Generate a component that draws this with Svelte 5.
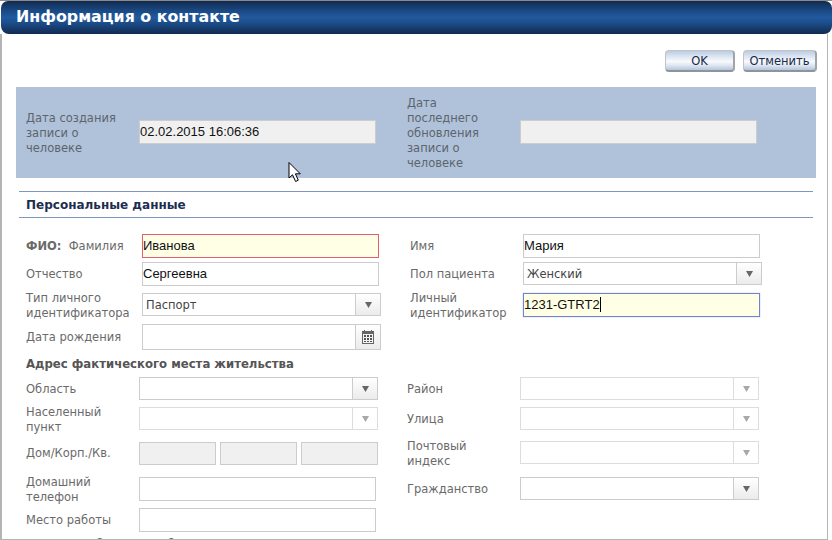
<script>
  const arrow = 'M0 0H7L3.5 6Z';
</script>

<div class="page">
  <header class="head"><h1>Информация о контакте</h1></header>
  <main class="body">
    <div class="toolbar">
      <button class="btn ok">OK</button>
      <button class="btn cancel">Отменить</button>
    </div>

    <section class="panel">
      <div class="lbl">Дата создания записи о человеке</div>
      <div class="cell"><div class="inp ro w237">02.02.2015 16:06:36</div></div>
      <div class="lbl">Дата последнего обновления записи о человеке</div>
      <div class="cell"><div class="inp ro w237"></div></div>
    </section>

    <h2 class="section">Персональные данные</h2>

    <div class="row p h24 first">
      <div class="lbl"><b>ФИО:</b>&nbsp; Фамилия</div>
      <div class="inp w237 err">Иванова</div>
      <div class="lbl">Имя</div>
      <div class="inp w237">Мария</div>
    </div>
    <div class="row p h24 m4">
      <div class="lbl">Отчество</div>
      <div class="inp w237">Сергеевна</div>
      <div class="lbl">Пол пациента</div>
      <div class="sel"><span class="val">Женский</span><span class="drop"><svg width="7" height="6"><path d={arrow} /></svg></span></div>
    </div>
    <div class="row p h24 m7">
      <div class="lbl lo">Тип личного идентификатора</div>
      <div class="sel"><span class="val">Паспорт</span><span class="drop"><svg width="7" height="6"><path d={arrow} /></svg></span></div>
      <div class="lbl lo">Личный идентификатор</div>
      <div class="inp w237 focus">1231-GTRT2<span class="caret"></span></div>
    </div>
    <div class="row p h26 m7">
      <div class="lbl">Дата рождения</div>
      <div class="sel tall">
        <span class="val"></span>
        <span class="drop">
          <svg class="cal" width="12" height="14" viewBox="0 0 12 14">
            <rect x="0.5" y="1.5" width="11" height="12" fill="#f4f4f4" stroke="#666" />
            <rect x="0" y="1" width="12" height="3" fill="#666" />
            <rect x="2" y="0" width="1" height="2" fill="#666" />
            <rect x="9" y="0" width="1" height="2" fill="#666" />
            <path d="M2 5h2v2H2zM5 5h2v2H5zM8 5h2v2H8zM2 8h2v2H2zM5 8h2v2H5zM8 8h2v2H8zM2 11h2v1H2zM5 11h2v1H5zM8 11h2v1H8z" fill="#555" />
          </svg>
        </span>
      </div>
      <div></div>
      <div></div>
    </div>

    <h3 class="sub">Адрес фактического места жительства</h3>

    <div class="row a h23">
      <div class="lbl lo">Область</div>
      <div class="sel"><span class="val"></span><span class="drop"><svg width="7" height="6"><path d={arrow} /></svg></span></div>
      <div class="lbl lo">Район</div>
      <div class="sel off"><span class="val"></span><span class="drop"><svg width="7" height="6"><path d={arrow} /></svg></span></div>
    </div>
    <div class="row a h23 m7">
      <div class="lbl lo">Населенный пункт</div>
      <div class="sel off"><span class="val"></span><span class="drop"><svg width="7" height="6"><path d={arrow} /></svg></span></div>
      <div class="lbl lo">Улица</div>
      <div class="sel off"><span class="val"></span><span class="drop"><svg width="7" height="6"><path d={arrow} /></svg></span></div>
    </div>
    <div class="row a h23 m12">
      <div class="lbl">Дом/Корп./Кв.</div>
      <div class="trio">
        <div class="inp ro"></div>
        <div class="inp ro"></div>
        <div class="inp ro"></div>
      </div>
      <div class="lbl">Почтовый индекс</div>
      <div class="sel off up"><span class="val"></span><span class="drop"><svg width="7" height="6"><path d={arrow} /></svg></span></div>
    </div>
    <div class="row a h24 m12">
      <div class="lbl lo">Домашний телефон</div>
      <div class="inp w237"></div>
      <div class="lbl">Гражданство</div>
      <div class="sel"><span class="val"></span><span class="drop"><svg width="7" height="6"><path d={arrow} /></svg></span></div>
    </div>
    <div class="row a h24 m7">
      <div class="lbl">Место работы</div>
      <div class="inp w237"></div>
      <div></div>
      <div></div>
    </div>
    <div class="clipped">Сведения об адресе работы</div>
  </main>

  <svg class="pointer" width="14" height="21" viewBox="0 0 14 21">
    <path d="M1 0.5V16L4.5 12.8L7.6 19.5L10.3 18.2L7.4 11.8H12.3Z" fill="#fff" stroke="#000" />
  </svg>
</div>

<style>
  :global(body) { margin: 0; background: #fff; }
  .page {
    position: relative;
    width: 832px;
    height: 540px;
    overflow: hidden;
    background: #fff;
    font-family: "DejaVu Sans", Verdana, sans-serif;
    font-size: 11.5px;
    color: #6a6a6a;
  }
  .page::before {
    content: "";
    display: block;
    height: 1px;
    background: #8a8a8a;
  }
  .head {
    height: 33px;
    margin-left: 1px;
    border-radius: 7px 7px 8px 8px;
    background: linear-gradient(#112a4e 0, #1b4a85 30%, #215a9f 50%, #1b4a85 70%, #122a4e 100%);
    display: flex;
    align-items: center;
    padding-left: 15px;
  }
  h1 {
    margin: 0;
    font-size: 15.85px;
    line-height: 20px;
    font-weight: 700;
    color: #fff;
    transform: translateY(-1px);
  }
  .body {
    box-sizing: border-box;
    width: 828px;
    height: 506px;
    border-left: 2px solid #b4b4b4;
    border-right: 1px solid #b4b4b4;
    border-bottom: 1px solid #b4b4b4;
    overflow: hidden;
  }
  .toolbar {
    display: flex;
    justify-content: flex-end;
    gap: 8px;
    margin-top: 16px;
    padding-right: 10px;
  }
  .btn {
    box-sizing: border-box;
    height: 22px;
    padding: 0;
    font: 11.5px "DejaVu Sans", Verdana, sans-serif;
    color: #16294a;
    border: 1px solid #c0c4ca;
    border-bottom: 2px solid #8f939a;
    border-right: 2px solid #a0a4ab;
    border-radius: 4px;
    background: linear-gradient(#bccce2 0, #e2eaf4 35%, #f8fafc 55%, #dfe7f1 75%, #b4c5dc 100%);
  }
  .ok { width: 70px; font-weight: 500; }
  .cancel { width: 74px; }
  .panel {
    box-sizing: border-box;
    width: 800px;
    height: 91px;
    margin: 15px 0 0 14px;
    padding-left: 10px;
    background: #b0c2da;
    display: grid;
    grid-template-columns: 113px 268px 113px 237px;
    grid-template-rows: minmax(0, 1fr);
    align-items: center;
  }
  .panel .lbl { padding: 2px 14px 0 0; color: #5d646d; }
  .panel .cell { padding-bottom: 2px; }
  .lbl { line-height: 15px; }
  .inp {
    box-sizing: border-box;
    height: 24px;
    border: 1px solid #ccc;
    background: #fff;
    font: 13px/22px "Liberation Sans", Arial, sans-serif;
    color: #111;
    padding-left: 0;
    white-space: nowrap;
  }
  .w237 { width: 237px; }
  .ro { background: #f0f0f0; }
  .err { background: #ffffe6; border-color: #e2606e; }
  .focus { background: #ffffe6; border-color: #6f85cf; box-shadow: 0 0 1px #8fa3e0; }
  .caret {
    display: inline-block;
    width: 1px;
    height: 15px;
    background: #000;
    vertical-align: -3px;
  }
  .section {
    box-sizing: border-box;
    width: 794px;
    height: 27px;
    margin: 13px 0 0 17px;
    padding: 1px 0 0 7px;
    border-top: 1px solid #7f97bf;
    border-bottom: 1px solid #7f97bf;
    font-size: 12px;
    line-height: 24px;
    font-weight: 700;
    color: #1c2e4f;
  }
  .row {
    display: grid;
    grid-template-rows: minmax(0, 1fr);
    align-items: center;
    padding-left: 24px;
  }
  .row.p { grid-template-columns: 116px 268px 113px 239px; }
  .row.a { grid-template-columns: 113px 268px 113px 239px; }
  .first { margin-top: 16px; }
  .h23 { height: 23px; }
  .h24 { height: 24px; }
  .h26 { height: 26px; }
  .m4 { margin-top: 4px; }
  .m7 { margin-top: 7px; }
  .m12 { margin-top: 12px; }
  .row .lbl { padding-right: 12px; }
  .row .lbl.lo { padding-top: 2px; }
  .sel {
    box-sizing: border-box;
    width: 239px;
    height: 23px;
    align-self: start;
    display: flex;
    border: 1px solid #ccc;
    background: #fff;
    color: #444;
  }
  .sel.tall { height: 26px; }
  .sel.off { border-color: #ddd; }
  .sel.up { margin-top: -1px; }
  .val {
    flex: 1;
    padding-left: 3px;
    line-height: 23px;
  }
  .drop {
    width: 24px;
    border-left: 1px solid #ccc;
    background: linear-gradient(#fff, #ebebeb);
    display: flex;
    align-items: center;
    justify-content: center;
  }
  .drop path { fill: #666; }
  .drop .cal path { fill: #555; }
  .off .drop { background: #fff; border-left-color: #ddd; }
  .off .drop path { fill: #a8a8a8; }
  .trio {
    display: flex;
    gap: 4px;
    align-self: start;
  }
  .trio .inp { width: 77px; height: 23px; }
  .sub {
    margin: 7px 0 6px 24px;
    font-size: 11.7px;
    line-height: 14px;
    font-weight: 700;
    color: #555;
  }
  .clipped {
    margin: 5px 0 0 24px;
    line-height: 15px;
    color: #6a6a6a;
  }
  .pointer {
    position: absolute;
    left: 288px;
    top: 162px;
  }
</style>
